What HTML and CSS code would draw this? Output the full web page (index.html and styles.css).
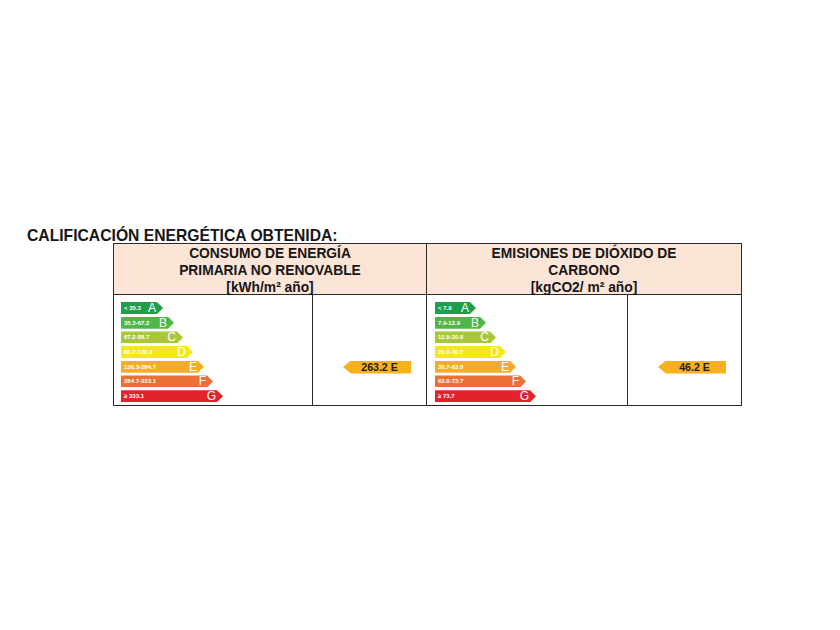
FILE: index.html
```html
<!DOCTYPE html>
<html lang="es">
<head>
<meta charset="utf-8">
<title>Calificación energética</title>
<link rel="stylesheet" href="styles.css">
</head>
<body>
<div class="page">
  <div class="title">CALIFICACIÓN ENERGÉTICA OBTENIDA:</div>
  <div class="grid">
    <div class="head c12">CONSUMO DE ENERGÍA<br>PRIMARIA NO RENOVABLE<br>[kWh/m² año]</div>
    <div class="head c34">EMISIONES DE DIÓXIDO DE<br>CARBONO<br>[kgCO2/ m² año]</div>

    <div class="bars c1">
      <div class="bar a w0"><span class="rng">&lt; 35.3</span><span class="ltr">A</span></div>
      <div class="bar b w1"><span class="rng">35.3-67.2</span><span class="ltr">B</span></div>
      <div class="bar c w2"><span class="rng">67.2-88.7</span><span class="ltr">C</span></div>
      <div class="bar d w3"><span class="rng">88.7-136.3</span><span class="ltr">D</span></div>
      <div class="bar e w4"><span class="rng">136.3-284.7</span><span class="ltr">E</span></div>
      <div class="bar f w5"><span class="rng">284.7-333.1</span><span class="ltr">F</span></div>
      <div class="bar g w6"><span class="rng">≥ 333.1</span><span class="ltr">G</span></div>
    </div>
    <div class="value c2"><div class="ind">263.2 E</div></div>

    <div class="bars c3">
      <div class="bar a w0 r"><span class="rng">&lt; 7.9</span><span class="ltr">A</span></div>
      <div class="bar b w1 r"><span class="rng">7.9-12.9</span><span class="ltr">B</span></div>
      <div class="bar c w2 r"><span class="rng">12.9-20.0</span><span class="ltr">C</span></div>
      <div class="bar d w3 r"><span class="rng">20.0-30.7</span><span class="ltr">D</span></div>
      <div class="bar e w4 r"><span class="rng">30.7-63.0</span><span class="ltr">E</span></div>
      <div class="bar f w5 r"><span class="rng">63.0-73.7</span><span class="ltr">F</span></div>
      <div class="bar g w6 r"><span class="rng">≥ 73.7</span><span class="ltr">G</span></div>
    </div>
    <div class="value c4"><div class="ind">46.2 E</div></div>
  </div>
</div>
</body>
</html>
```

FILE: styles.css
```css
html, body {
  margin: 0;
  padding: 0;
  background: #ffffff;
}
body {
  font-family: "Liberation Sans", Arial, sans-serif;
  color: #161616;
}
.page {
  width: 840px;
  height: 630px;
  padding: 228px 0 0 27px;
  box-sizing: border-box;
}
.title {
  font-size: 15.7px;
  font-weight: bold;
  line-height: 15px;
  height: 15px;
  white-space: nowrap;
}
.grid {
  margin-left: 86px;
  display: grid;
  grid-template-columns: 199px 114px 201px 113px;
  grid-template-rows: 51px 110px;
  width: 627px;
  border: 1px solid #2a2a2a;
}
.head {
  background: #fce4d6;
  border-bottom: 1px solid #2a2a2a;
  text-align: center;
  font-weight: bold;
  font-size: 13.8px;
  line-height: 17px;
  padding-top: 1px;
  box-sizing: border-box;
  overflow: visible;
  white-space: nowrap;
}
.c12 {
  grid-column: 1 / span 2;
  border-right: 1px solid #2a2a2a;
}
.c34 {
  grid-column: 3 / span 2;
}
.c1, .c2, .c3 {
  border-right: 1px solid #2a2a2a;
}
.bars {
  padding-top: 7px;
  padding-left: 7px;
  display: flex;
  flex-direction: column;
  gap: 2.7px;
}
.c3 {
  padding-left: 8px;
}
.bar {
  height: 12px;
  display: flex;
  align-items: center;
  justify-content: space-between;
  box-sizing: border-box;
  padding: 0 7px 0 3px;
  clip-path: polygon(0 0, calc(100% - 6px) 0, 100% 50%, calc(100% - 6px) 100%, 0 100%);
  color: #ffffff;
}
.rng {
  font-size: 6px;
  font-weight: bold;
  line-height: 8px;
  white-space: nowrap;
}
.ltr {
  font-size: 12px;
  line-height: 12px;
}
.a { background: #1f9e4b; }
.b { background: #4fb648; }
.c { background: #a8c83a; }
.d { background: #f4e71c; }
.e { background: #f3ad2b; }
.f { background: #eb7035; }
.g { background: #e2232c; }
.w0 { width: 42px; }
.w1 { width: 53px; }
.w2 { width: 62px; }
.w3 { width: 72px; }
.w4 { width: 83px; }
.w5 { width: 92px; }
.w6 { width: 102px; }
.r.w0 { width: 41px; }
.r.w1 { width: 51px; }
.r.w2 { width: 61px; }
.r.w3 { width: 71px; }
.r.w4 { width: 81px; }
.r.w5 { width: 91px; }
.r.w6 { width: 101px; }
.value {
  display: flex;
  justify-content: flex-end;
  align-items: flex-start;
  padding: 65.5px 15px 0 0;
}
.ind {
  width: 68px;
  height: 13px;
  background: #f6b11d;
  clip-path: polygon(0 50%, 8px 0, 100% 0, 100% 100%, 8px 100%);
  box-sizing: border-box;
  padding-left: 5px;
  text-align: center;
  font-size: 10.6px;
  font-weight: bold;
  line-height: 13px;
  color: #1c1c1c;
}
```
